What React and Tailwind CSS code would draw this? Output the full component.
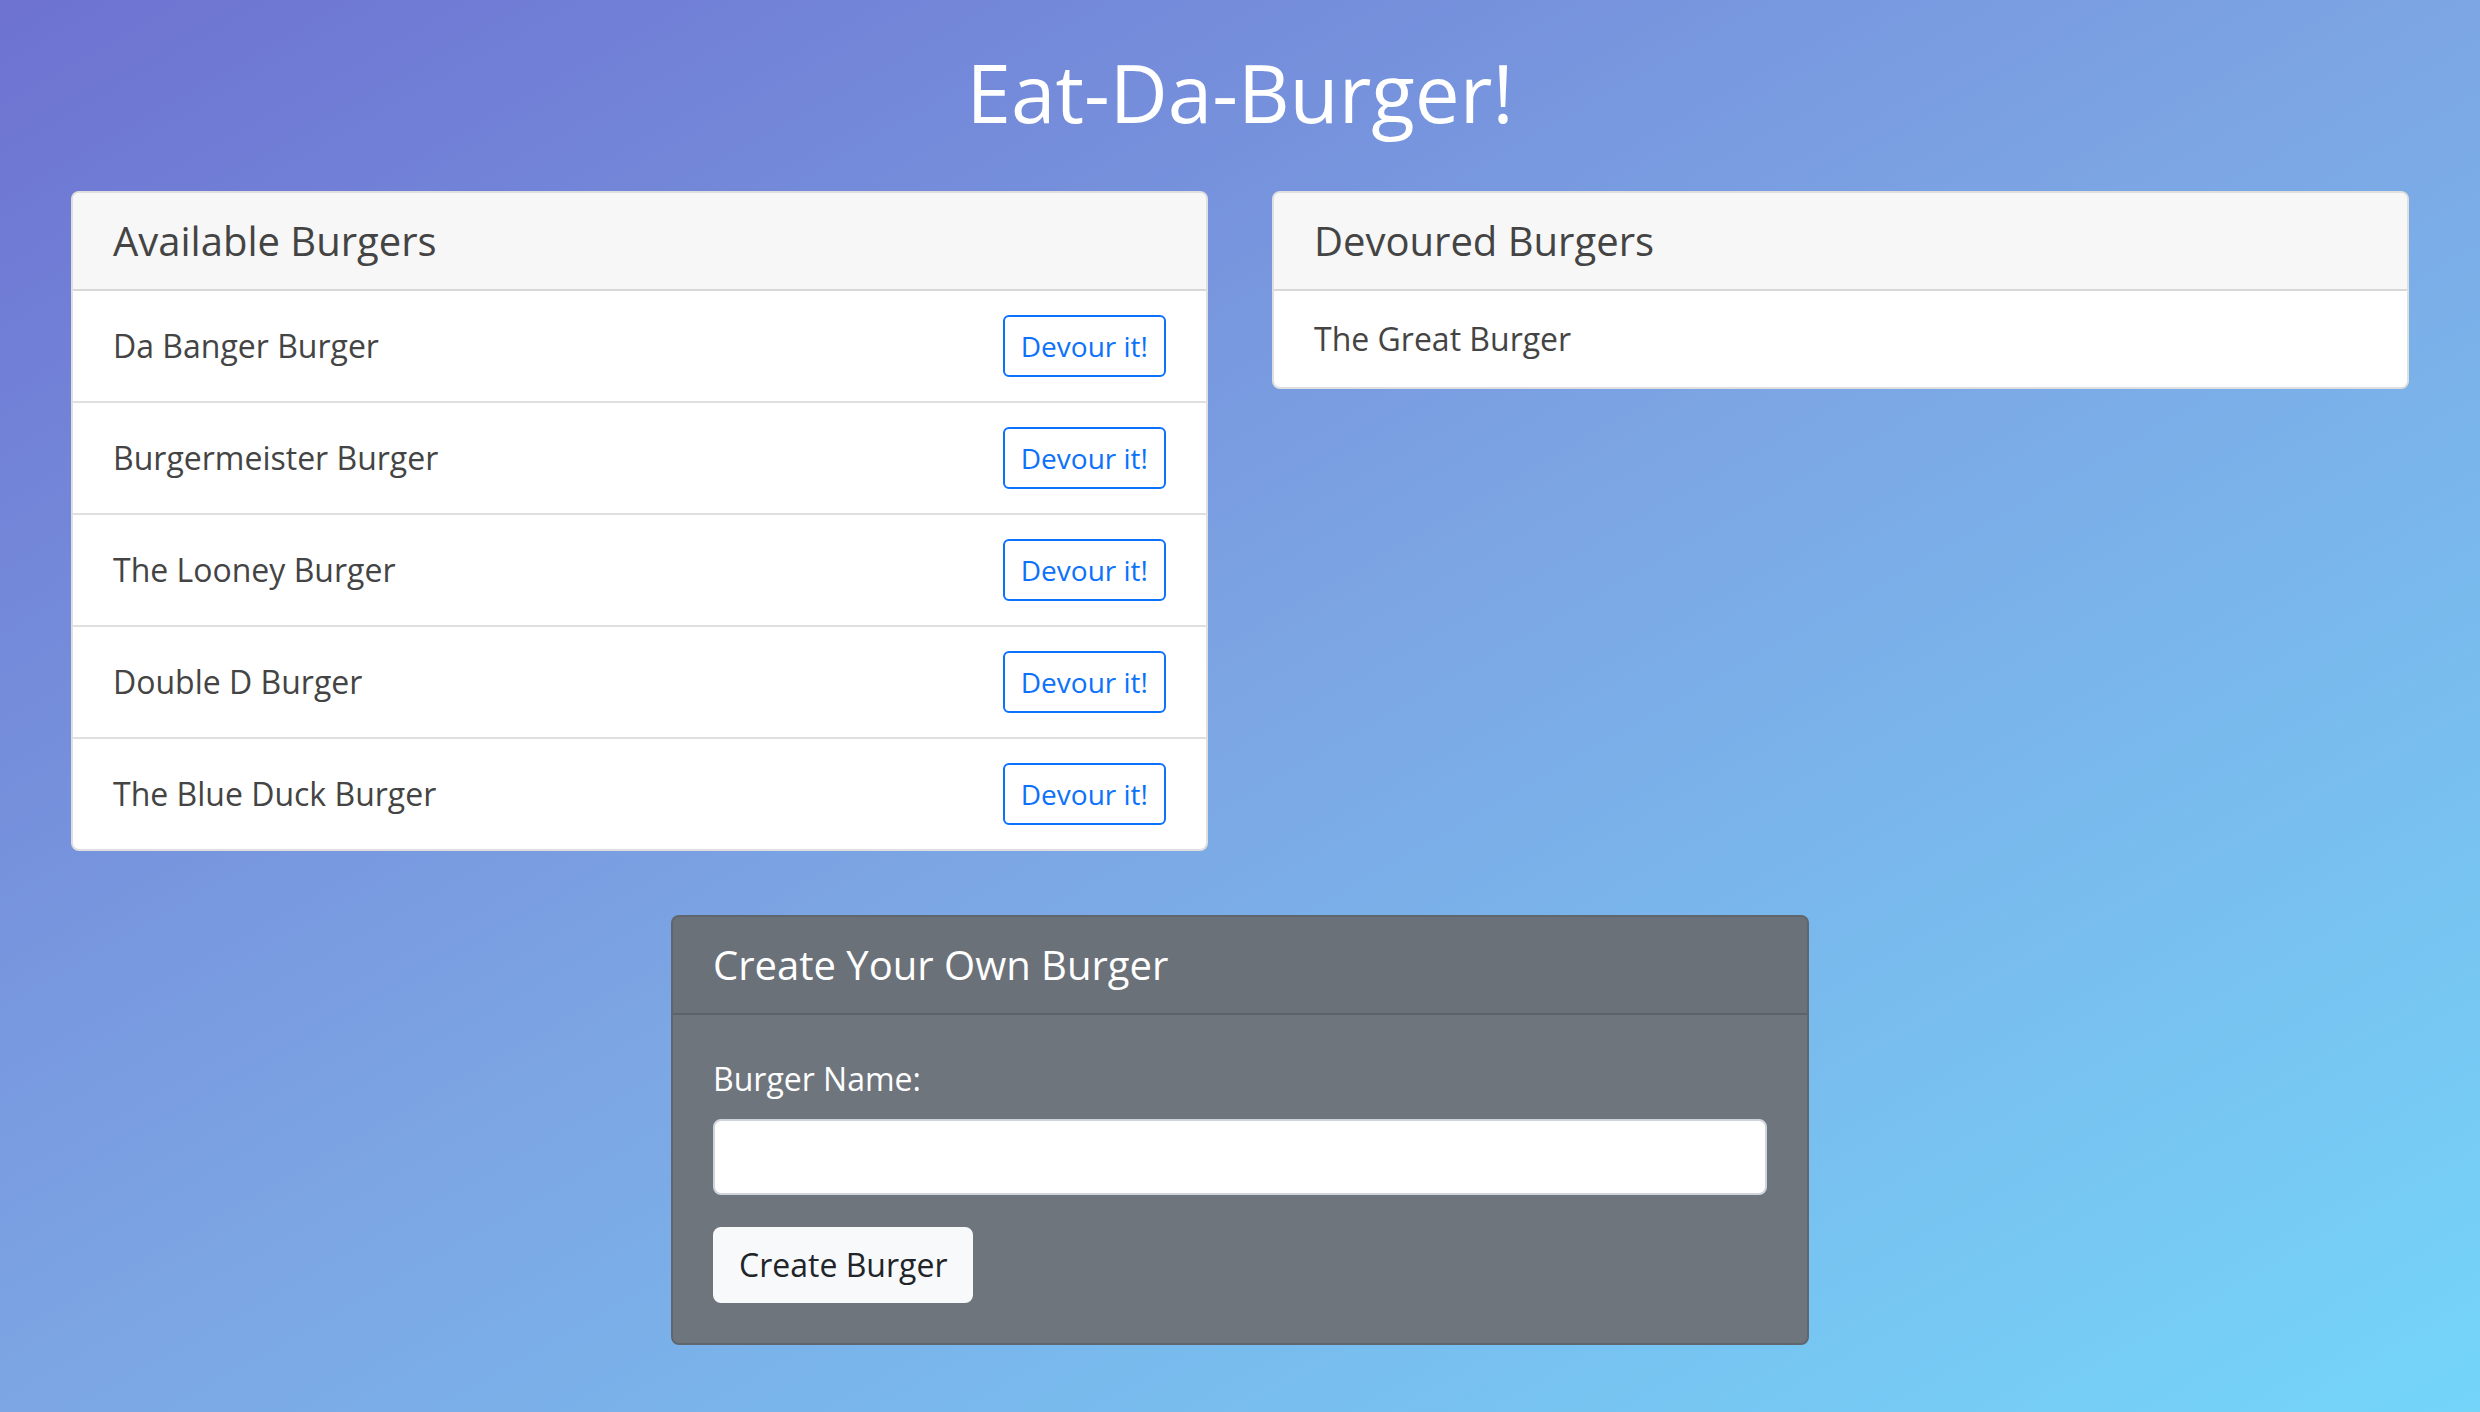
import React from "react";

const available = [
  "Da Banger Burger",
  "Burgermeister Burger",
  "The Looney Burger",
  "Double D Burger",
  "The Blue Duck Burger",
];

export default function App() {
  return (
    <div className="min-h-screen w-full bg-[linear-gradient(to_bottom_right,#6d72d1,#7ca6e4,#74d5f9)] font-['Open_Sans',sans-serif] pt-[44px] px-[71px] pb-[60px]">
      <h1 className="text-center text-white text-[80px] leading-[96px] font-normal">
        Eat-Da-Burger!
      </h1>

      <div className="mt-[51px] grid grid-cols-2 gap-x-[64px] items-start">
        <div className="bg-white border-2 border-black/[0.125] rounded-[8px] overflow-hidden">
          <div className="bg-[#f7f7f7] border-b-2 border-black/[0.125] px-[40px] py-[24px] text-[40px] leading-[48px] text-[#444]">
            Available Burgers
          </div>
          {available.map((name, i) => (
            <div
              key={name}
              className={
                i < available.length - 1
                  ? "flex items-center justify-between px-[40px] py-[24px] border-b-2 border-black/[0.125]"
                  : "flex items-center justify-between px-[40px] py-[24px]"
              }
            >
              <span className="text-[32px] leading-[48px] text-[#444]">{name}</span>
              <button className="border-2 border-[#0d72fb] text-[#0d72fb] bg-white rounded-[6px] px-[16px] py-[8px] text-[28px] leading-[42px]">
                Devour it!
              </button>
            </div>
          ))}
        </div>

        <div className="bg-white border-2 border-black/[0.125] rounded-[8px] overflow-hidden">
          <div className="bg-[#f7f7f7] border-b-2 border-black/[0.125] px-[40px] py-[24px] text-[40px] leading-[48px] text-[#444]">
            Devoured Burgers
          </div>
          <div className="px-[40px] py-[24px] text-[32px] leading-[48px] text-[#444]">
            The Great Burger
          </div>
        </div>
      </div>

      <div className="mt-[64px] flex justify-center">
        <div className="w-[1138px] bg-[#6e757d] border-2 border-black/[0.125] rounded-[8px] overflow-hidden text-white">
          <div className="bg-black/[0.03] border-b-2 border-black/[0.125] px-[40px] py-[24px] text-[40px] leading-[48px]">
            Create Your Own Burger
          </div>
          <div className="p-[40px]">
            <label className="block text-[32px] leading-[48px] mb-[16px]">Burger Name:</label>
            <input
              type="text"
              className="block w-full h-[76px] bg-white border-2 border-[#ced4da] rounded-[8px] px-[24px] text-[32px] text-[#495057] outline-none"
            />
            <button className="mt-[32px] bg-[#f8f9fa] border-2 border-[#f8f9fa] text-[#212529] rounded-[8px] px-[24px] py-[12px] text-[32px] leading-[48px]">
              Create Burger
            </button>
          </div>
        </div>
      </div>
    </div>
  );
}
